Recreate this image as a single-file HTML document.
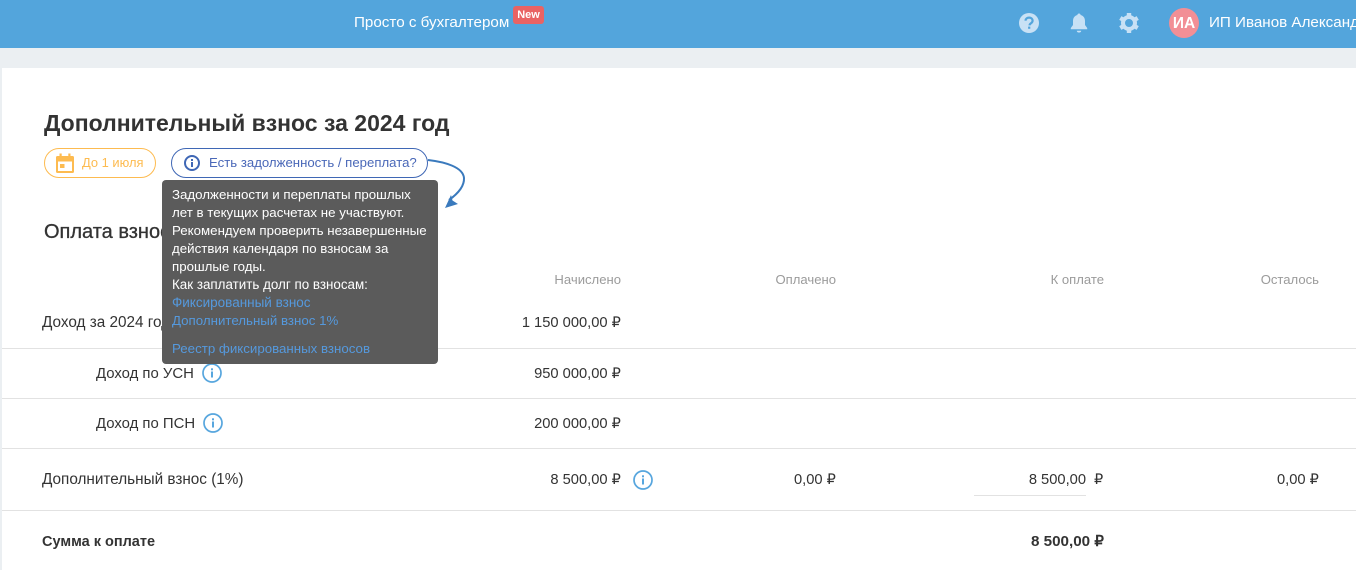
<!DOCTYPE html>
<html lang="ru"><head><meta charset="utf-8"><style>
html,body{margin:0;padding:0;width:1356px;height:570px;overflow:hidden;background:#ebeff2;font-family:"Liberation Sans",sans-serif;color:#333}
.a{position:absolute;white-space:nowrap;line-height:18px}
.r{text-align:right}
.l{position:absolute;left:2px;right:0;height:1px;background:#e2e2e2}
.t{font-size:14.7px}
.w{font-size:15.3px}
.h{font-size:13.1px;color:#9b9b9b}
.tip{left:172px;font-size:13.3px;color:#fff;line-height:18px}
.lnk{color:#5599dd}
svg{position:absolute;overflow:visible}
</style></head><body>
<div style="position:absolute;left:0;top:0;width:1356px;height:48px;background:#53a5dc"></div>
<div class="a" style="left:354px;top:14px;font-size:15.2px;color:#fff">Просто с бухгалтером</div>
<div class="a" style="left:513px;top:6px;width:31px;height:18px;background:#e96363;border-radius:3px;color:#fff;font-size:11px;font-weight:bold;text-align:center;line-height:18px">New</div>

<svg style="left:1019px;top:13px" width="20" height="20" viewBox="0 0 20 20"><circle cx="10" cy="10" r="10" fill="#c8e1f5"/><path d="M6.500 7.700C6.700 5.700 8.200 4.600 10.100 4.600c2 0 3.500 1.200 3.500 3 0 1.400-.8 2.100-1.800 2.800-.8.5-1.200 1-1.200 2" fill="none" stroke="#53a5dc" stroke-width="2.200"/><rect x="9.100" y="13.600" width="2.200" height="2.200" fill="#53a5dc"/></svg>
<svg style="left:1069px;top:12px" width="20" height="22" viewBox="0 0 20 22"><path d="M10 1.500c1 0 1.600.7 1.600 1.500 3 .7 4.400 3.200 4.400 6v4l2.200 3v1.200H1.800V16L4 13V9c0-2.800 1.400-5.300 4.400-6 0-.8.6-1.500 1.600-1.500z" fill="#c8e1f5"/><path d="M7.800 18.800h4.400c0 1.100-.9 1.800-2.200 1.800s-2.200-.7-2.200-1.800z" fill="#c8e1f5"/></svg>
<svg style="left:1119px;top:13px" width="20" height="20" viewBox="0 0 20 20"><circle cx="10" cy="10" r="6" fill="none" stroke="#c8e1f5" stroke-width="4"/><g stroke="#c8e1f5" stroke-width="4.400"><path d="M10 0v4M10 16v4M1.300 5l3.500 2M15.200 13l3.500 2M1.300 15l3.500-2M15.200 7l3.500-2"/></g></svg>
<div class="a" style="left:1169px;top:8px;width:30px;height:30px;border-radius:50%;background:#f28f96;color:#fff;font-weight:bold;font-size:15.5px;line-height:31px;text-align:center">ИА</div>
<div class="a" style="left:1209px;top:14px;font-size:15.2px;color:#fff">ИП Иванов Александр</div>

<div style="position:absolute;left:2px;top:68px;width:1354px;height:502px;background:#fff"></div>

<div class="a" style="left:44px;top:108px;font-size:23px;line-height:30px;font-weight:bold;color:#333">Дополнительный взнос за 2024 год</div>

<div class="a" style="left:44px;top:148px;width:110px;height:28px;border:1px solid #fdbb50;border-radius:15px"></div>
<svg style="left:56px;top:153px" width="18" height="20" viewBox="0 0 18 20"><path d="M0 4.500A1.500 1.500 0 0 1 1.500 3H3.500V.5h2.200V3h6.600V.5h2.200V3h2A1.500 1.500 0 0 1 18 4.500V18.500A1.500 1.500 0 0 1 16.500 20h-15A1.500 1.500 0 0 1 0 18.500z" fill="#fdbb50"/><rect x="2" y="8.500" width="14" height="9.500" fill="#fff"/><rect x="4" y="11" width="4.500" height="4" fill="#fdbb50"/></svg>
<div class="a" style="left:82px;top:154px;font-size:12.9px;color:#fdbb50">До 1 июля</div>

<div class="a" style="left:171px;top:148px;width:255px;height:28px;border:1px solid #3f67b5;border-radius:15px"></div>
<svg style="left:183px;top:154px" width="18" height="18" viewBox="0 0 18 18"><circle cx="9" cy="9" r="7" fill="none" stroke="#3f67b5" stroke-width="2"/><rect x="8" y="8" width="2" height="5" fill="#3f67b5"/><rect x="8" y="5" width="2" height="2" fill="#3f67b5"/></svg>
<div class="a" style="left:209px;top:154px;font-size:13.2px;color:#4a68b8">Есть задолженность / переплата?</div>

<svg style="left:425px;top:155px" width="45" height="60" viewBox="0 0 45 60"><path d="M3 5C20 7 38 12 39 23C39.500 32 31 40 24 45" fill="none" stroke="#3a7abd" stroke-width="2"/><path d="M20 53L26 40L27.500 45.500L33 49Z" fill="#3a7abd"/></svg>

<div class="a" style="left:44px;top:220px;font-size:20px;line-height:24px;color:#333;-webkit-text-stroke:.3px #333">Оплата взносов</div>

<div class="a h r" style="left:500px;width:121px;top:271px">Начислено</div>
<div class="a h r" style="left:715px;width:121px;top:271px">Оплачено</div>
<div class="a h r" style="left:983px;width:121px;top:271px">К оплате</div>
<div class="a h r" style="left:1198px;width:121px;top:271px">Осталось</div>

<div class="a w" style="left:42px;top:314px">Доход за 2024 год</div>
<div class="a t r" style="left:450px;width:171px;top:314px">1 150 000,00 ₽</div>
<div class="l" style="top:348px"></div>

<div class="a w" style="left:96px;top:365px;font-size:14.9px">Доход по УСН</div>
<svg style="left:202px;top:363px" width="20" height="20" viewBox="0 0 20 20"><circle cx="10" cy="10" r="9" fill="none" stroke="#57a6de" stroke-width="1.700"/><rect x="9" y="8.500" width="2" height="6" fill="#57a6de"/><rect x="9" y="5.300" width="2" height="2" fill="#57a6de"/></svg>
<div class="a t r" style="left:450px;width:171px;top:365px">950 000,00 ₽</div>
<div class="l" style="top:398px"></div>

<div class="a w" style="left:96px;top:415px;font-size:14.9px">Доход по ПСН</div>
<svg style="left:203px;top:413px" width="20" height="20" viewBox="0 0 20 20"><circle cx="10" cy="10" r="9" fill="none" stroke="#57a6de" stroke-width="1.700"/><rect x="9" y="8.500" width="2" height="6" fill="#57a6de"/><rect x="9" y="5.300" width="2" height="2" fill="#57a6de"/></svg>
<div class="a t r" style="left:450px;width:171px;top:415px">200 000,00 ₽</div>
<div class="l" style="top:448px"></div>

<div class="a w" style="left:42px;top:471px">Дополнительный взнос (1%)</div>
<div class="a t r" style="left:450px;width:171px;top:471px">8 500,00 ₽</div>
<svg style="left:633px;top:470px" width="20" height="20" viewBox="0 0 20 20"><circle cx="10" cy="10" r="9" fill="none" stroke="#57a6de" stroke-width="1.700"/><rect x="9" y="8.500" width="2" height="6" fill="#57a6de"/><rect x="9" y="5.300" width="2" height="2" fill="#57a6de"/></svg>
<div class="a t r" style="left:715px;width:121px;top:471px">0,00 ₽</div>
<div class="a t r" style="left:974px;width:112px;top:471px">8 500,00</div>
<div class="a t" style="left:1094px;top:471px">₽</div>
<div style="position:absolute;left:974px;top:495px;width:112px;height:1px;background:#e2e2e2"></div>
<div class="a t r" style="left:1198px;width:121px;top:471px">0,00 ₽</div>
<div class="l" style="top:510px"></div>

<div class="a" style="left:42px;top:533px;font-weight:bold;font-size:14.5px">Сумма к оплате</div>
<div class="a r" style="left:983px;width:121px;top:533px;font-weight:bold;font-size:15.2px">8 500,00 ₽</div>

<div style="position:absolute;left:162px;top:180px;width:276px;height:184px;background:#5b5b5b;border-radius:4px"></div>
<div class="a tip" style="top:186px">Задолженности и переплаты прошлых</div>
<div class="a tip" style="top:204px">лет в текущих расчетах не участвуют.</div>
<div class="a tip" style="top:222px">Рекомендуем проверить незавершенные</div>
<div class="a tip" style="top:240px">действия календаря по взносам за</div>
<div class="a tip" style="top:258px">прошлые годы.</div>
<div class="a tip" style="top:276px;font-size:13.4px">Как заплатить долг по взносам:</div>
<div class="a tip lnk" style="top:294px;font-size:13.5px">Фиксированный взнос</div>
<div class="a tip lnk" style="top:312px">Дополнительный взнос 1%</div>
<div class="a tip lnk" style="top:340px">Реестр фиксированных взносов</div>
</body></html>
